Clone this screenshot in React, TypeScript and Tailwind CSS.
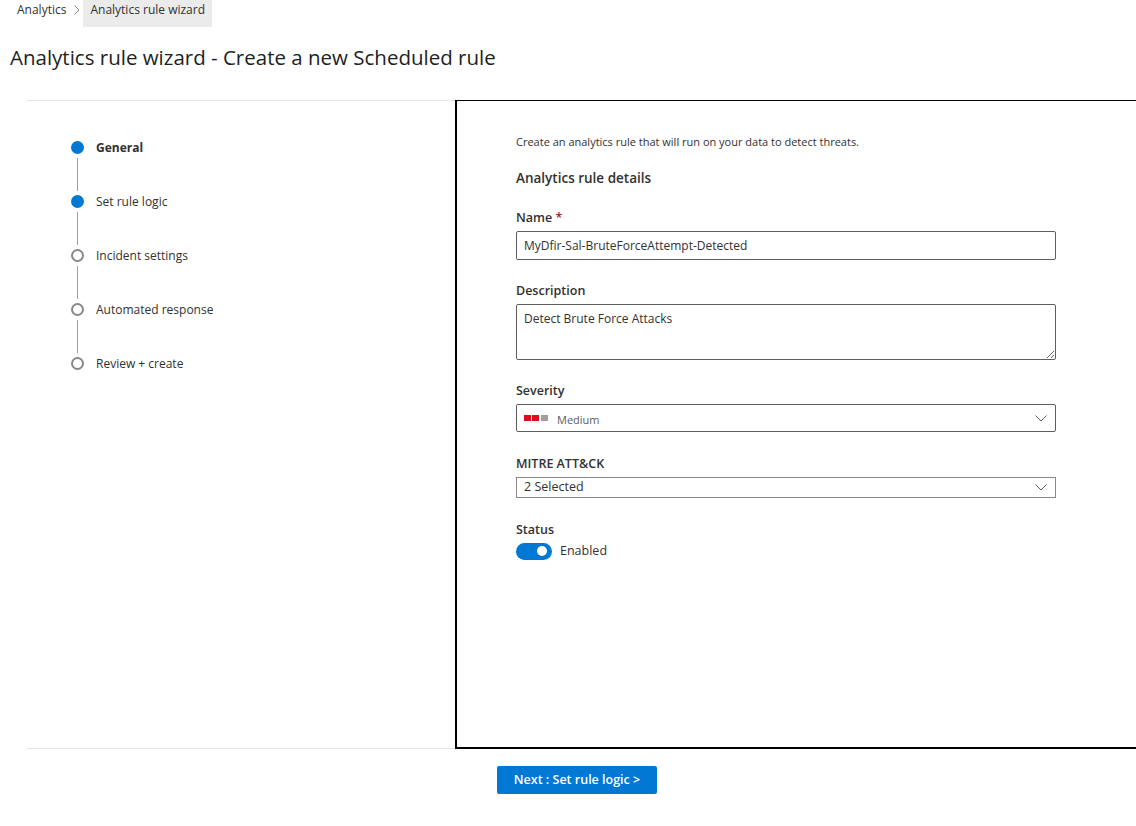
import React from 'react';

const steps = [
  { label: 'General', done: true, current: true },
  { label: 'Set rule logic', done: true },
  { label: 'Incident settings', done: false },
  { label: 'Automated response', done: false },
  { label: 'Review + create', done: false },
];

const Chevron = () => (
  <svg width="12" height="7" viewBox="0 0 12 7" fill="none" className="shrink-0">
    <polyline points="0.5,0.5 6,6 11.5,0.5" stroke="#605e5c" strokeWidth="1" />
  </svg>
);

export default function App() {
  return (
    <div
      className="w-[1136px] h-[826px] bg-white text-[#323130] overflow-hidden"
      style={{ fontFamily: "'Open Sans', 'Noto Sans', sans-serif" }}
    >
      {/* Breadcrumb */}
      <div className="flex items-start h-[27px] text-[12px]">
        <span className="ml-[17px] mt-[1px] leading-[18px]">Analytics</span>
        <svg width="6" height="10" viewBox="0 0 6 10" className="ml-[8px] mt-[5px]">
          <polyline points="0.5,0.5 5,5 0.5,9.5" fill="none" stroke="#8a8886" strokeWidth="1" />
        </svg>
        <span className="ml-[3px] h-[27px] px-[7px] pt-[1px] leading-[18px] bg-[#ebebeb]">
          Analytics rule wizard
        </span>
      </div>

      {/* Title */}
      <h1 className="ml-[10px] mt-[16px] text-[20.5px] leading-[28px] text-[#201f1e]">
        Analytics rule wizard - Create a new Scheduled rule
      </h1>

      {/* Wizard body */}
      <div className="flex mt-[29px] ml-[27px] h-[649px]">
        {/* Steps */}
        <div className="w-[428px] border-t border-b border-[#e6e6e6] pt-[40px] pl-[44px]">
          {steps.map((s, i) => (
            <div key={s.label}>
              <div className="flex items-center h-[13px]">
                <span
                  className={
                    s.done
                      ? 'w-[13px] h-[13px] rounded-full bg-[#0078d4]'
                      : 'w-[13px] h-[13px] rounded-full border-2 border-[#8a8886] bg-white'
                  }
                />
                <span
                  className={
                    'ml-[12px] text-[12px] leading-[18px] ' +
                    (s.current ? 'font-bold text-[#323130]' : 'text-[#323130]')
                  }
                >
                  {s.label}
                </span>
              </div>
              {i < steps.length - 1 && (
                <div className="ml-[6px] my-[4px] w-px h-[33px] bg-[#a19f9d]" />
              )}
            </div>
          ))}
        </div>

        {/* Form panel */}
        <div className="flex-1 border-t border-l-2 border-b-2 border-black pl-[59px] pt-[33px]">
          <p className="text-[11px] leading-[16px]">
            Create an analytics rule that will run on your data to detect threats.
          </p>
          <h2 className="mt-[18px] text-[13.5px] leading-[20px] font-semibold">Analytics rule details</h2>

          <div className="w-[540px]">
            <label className="block mt-[20px] text-[12.5px] leading-[20px] font-semibold">
              Name <span className="text-[#a4262c]">*</span>
            </label>
            <div className="mt-[3px] h-[29px] border border-[#605e5c] rounded-[2px] flex items-center px-[7px] text-[12px]">
              MyDfir-Sal-BruteForceAttempt-Detected
            </div>

            <label className="block mt-[21px] text-[12.5px] leading-[20px] font-semibold">Description</label>
            <textarea
              readOnly
              defaultValue="Detect Brute Force Attacks"
              className="block mt-[3px] w-full h-[56px] border border-[#605e5c] rounded-[2px] px-[7px] pt-[5px] text-[12px] leading-[18px] outline-none"
            />

            <label className="block mt-[21px] text-[12.5px] leading-[20px] font-semibold">Severity</label>
            <div className="mt-[3px] h-[28px] border border-[#605e5c] rounded-[2px] flex items-center pl-[7px] pr-[8px]">
              <span className="w-[7px] h-[6px] bg-[#e00b1c]" />
              <span className="ml-[1px] w-[7px] h-[6px] bg-[#e00b1c]" />
              <span className="ml-[2px] w-[7px] h-[6px] bg-[#a19f9d]" />
              <span className="ml-[9px] mt-[4px] text-[11px] text-[#605e5c] flex-1">Medium</span>
              <Chevron />
            </div>

            <label className="block mt-[22px] text-[12.5px] leading-[20px] font-semibold">MITRE ATT&amp;CK</label>
            <div className="mt-[3px] h-[21px] border border-[#8a8886] flex items-center pl-[7px] pr-[8px]">
              <span className="text-[12.5px] flex-1">2 Selected</span>
              <Chevron />
            </div>

            <label className="block mt-[22px] text-[12.5px] leading-[20px] font-semibold">Status</label>
            <div className="mt-[2px] flex items-center">
              <span className="w-[36px] h-[17px] rounded-full bg-[#0078d4] flex items-center justify-end pr-[5px]">
                <span className="w-[10px] h-[10px] rounded-full bg-white" />
              </span>
              <span className="ml-[8px] text-[12.5px]">Enabled</span>
            </div>
          </div>
        </div>
      </div>

      {/* Footer */}
      <div className="mt-[17px] ml-[497px]">
        <button className="w-[160px] h-[28px] rounded-[2px] bg-[#0078d4] text-white text-[12.5px] font-semibold">
          Next : Set rule logic &gt;
        </button>
      </div>
    </div>
  );
}
